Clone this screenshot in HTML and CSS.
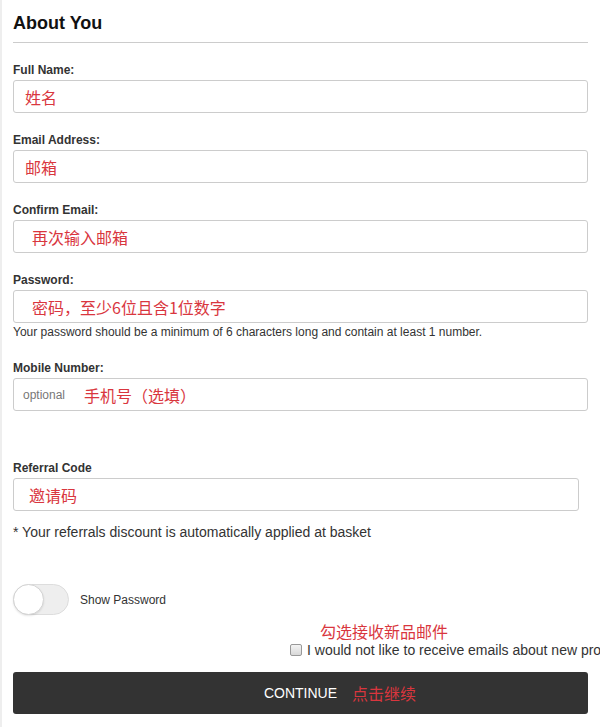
FILE: index.html
```html
<!DOCTYPE html>
<html lang="en">
<head>
  <meta charset="UTF-8" />
  <meta name="viewport" content="width=device-width, initial-scale=1.0" />
  <title>About You</title>
  <link rel="stylesheet" href="styles.css">
</head>
<body>
  <div class="page">
    <h2 class="title">About You</h2>

    <div class="group">
      <label class="label">Full Name:</label>
      <div class="input"><span class="note">姓名</span></div>
    </div>

    <div class="group">
      <label class="label">Email Address:</label>
      <div class="input"><span class="note">邮箱</span></div>
    </div>

    <div class="group">
      <label class="label">Confirm Email:</label>
      <div class="input wide-pad"><span class="note">再次输入邮箱</span></div>
    </div>

    <div class="group group-help">
      <label class="label">Password:</label>
      <div class="input wide-pad"><span class="note">密码，至少6位且含1位数字</span></div>
      <p class="help">Your password should be a minimum of 6 characters long and contain at least 1 number.</p>
    </div>

    <div class="group group-mobile">
      <label class="label">Mobile Number:</label>
      <div class="input small-pad">
        <span class="placeholder">optional</span>
        <span class="note">手机号（选填）</span>
      </div>
    </div>

    <div class="group group-ref">
      <label class="label">Referral Code</label>
      <div class="input input-short mid-pad"><span class="note">邀请码</span></div>
      <p class="ref-note">* Your referrals discount is automatically applied at basket</p>
    </div>

    <div class="toggle-row">
      <div class="toggle"><span class="knob"></span></div>
      <span class="toggle-label">Show Password</span>
    </div>

    <div class="optout">
      <span class="note optout-note">勾选接收新品邮件</span>
      <label class="optout-line"><input type="checkbox"> I would not like to receive emails about new products and offers</label>
    </div>

    <button class="continue"><span>CONTINUE</span><span class="note">点击继续</span></button>
  </div>
</body>
</html>
```

FILE: styles.css
```css
html, body {
  margin: 0;
  overflow-x: hidden;
}
body {
  font-family: "Liberation Sans", Arial, sans-serif;
  color: #333;
  background: #fff;
}
.page {
  border-left: 2px solid #eee;
  padding: 12px 12px 14px 11px;
  width: 575px;
}
.title {
  margin: 0;
  font-size: 18px;
  line-height: 22px;
  color: #111;
  padding-bottom: 8px;
  border-bottom: 1px solid #ccc;
}
.group {
  margin-top: 19px;
}
.label {
  display: block;
  font-size: 12px;
  font-weight: bold;
  line-height: 16px;
  margin-bottom: 2px;
  color: #333;
}
.input {
  box-sizing: border-box;
  height: 33px;
  border: 1px solid #ccc;
  border-radius: 3px;
  display: flex;
  align-items: center;
  padding-left: 11px;
  background: #fff;
}
.input.wide-pad {
  padding-left: 18px;
}
.input.mid-pad {
  padding-left: 15px;
}
.input.small-pad {
  padding-left: 9px;
}
.input-short {
  width: 566px;
}
.note {
  font-family: "Noto Sans CJK SC", "Liberation Sans", sans-serif;
  font-size: 16px;
  color: #d9363e;
  font-weight: normal;
}
.placeholder {
  font-size: 12px;
  color: #777;
  margin-right: 19px;
}
.help {
  margin: 2px 0 0;
  font-size: 12px;
  line-height: 14px;
  color: #333;
}
.group-mobile {
  margin-top: 21px;
}
.group-ref {
  margin-top: 49px;
}
.ref-note {
  margin: 13px 0 0;
  font-size: 14px;
  line-height: 16px;
  color: #333;
}
.toggle-row {
  margin-top: 44px;
  display: flex;
  align-items: center;
}
.toggle {
  box-sizing: border-box;
  width: 56px;
  height: 31px;
  border-radius: 16px;
  background: #eee;
  border: 1px solid #ddd;
  position: relative;
}
.knob {
  position: absolute;
  left: -1px;
  top: -1px;
  width: 31px;
  height: 31px;
  box-sizing: border-box;
  border-radius: 50%;
  background: #fff;
  border: 1px solid #d4d4d4;
  box-shadow: 0 1px 2px rgba(0,0,0,0.1);
}
.toggle-label {
  margin-left: 11px;
  font-size: 12px;
  color: #333;
}
.optout {
  margin-top: 5px;
  margin-left: 277px;
  white-space: nowrap;
}
.optout-note {
  display: block;
  margin-left: 30px;
  line-height: 22px;
}
.optout-line {
  display: flex;
  align-items: center;
  font-size: 14px;
  line-height: 16px;
  color: #333;
}
.optout-line input {
  -webkit-appearance: none;
  appearance: none;
  flex-shrink: 0;
  margin: 0 5px 0 0;
  width: 12px;
  height: 12px;
  border: 1px solid #999;
  border-radius: 2px;
  background: linear-gradient(#f4f4f4, #d8d8d8);
}
.continue {
  display: flex;
  align-items: center;
  justify-content: center;
  box-sizing: border-box;
  width: 100%;
  height: 42px;
  margin-top: 14px;
  padding: 0;
  border: none;
  border-radius: 3px;
  background: #333;
  color: #fff;
  font-family: "Liberation Sans", Arial, sans-serif;
  font-size: 14px;
  cursor: pointer;
}
.continue .note {
  width: 0;
  white-space: nowrap;
  position: relative;
  left: 15px;
}
```
